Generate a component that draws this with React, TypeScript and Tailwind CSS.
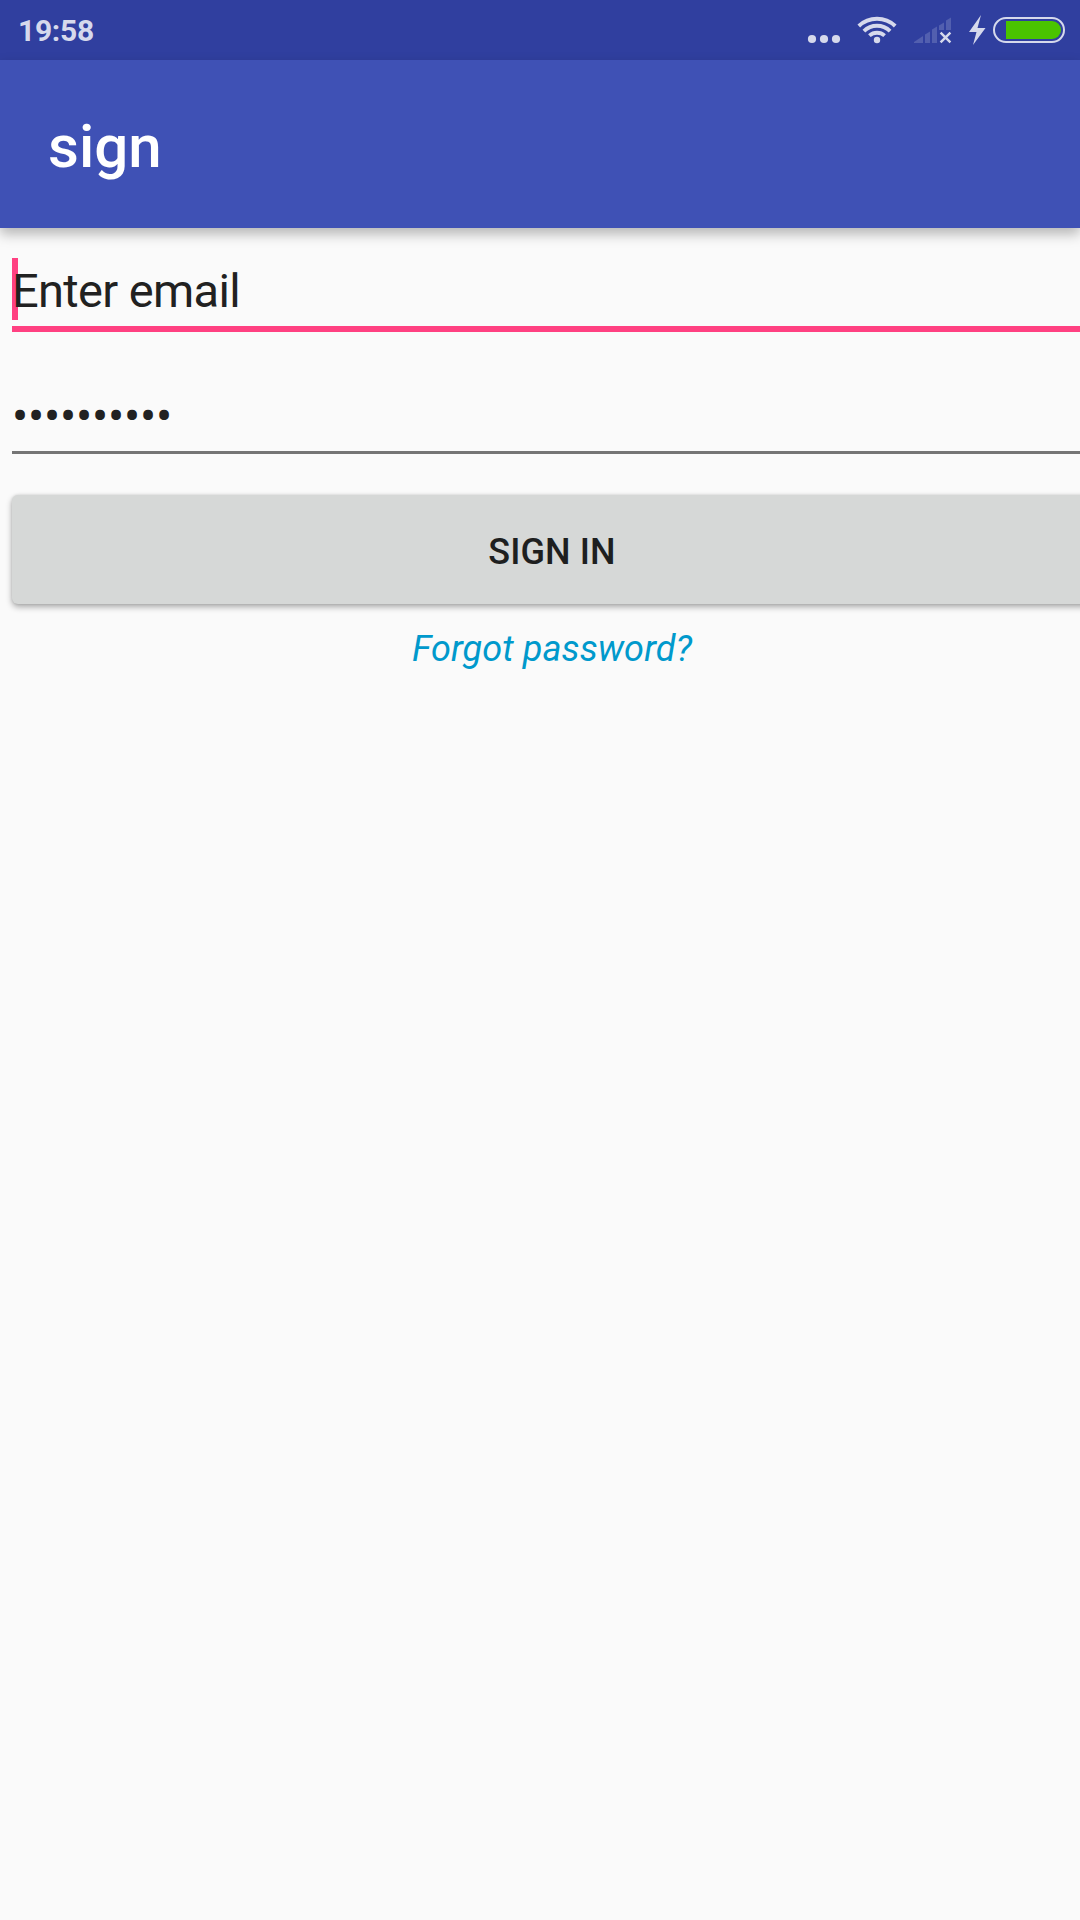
function StatusIcons() {
  return (
    <div className="flex h-full items-center">
      <svg width="280" height="60" viewBox="800 0 280 60" fill="none" aria-hidden="true">
        <g fill="#d6d9ec">
          <circle cx="812" cy="39" r="4.1" />
          <circle cx="824" cy="39" r="4.1" />
          <circle cx="836" cy="39" r="4.1" />
          <circle cx="877" cy="40" r="3.2" />
          <path d="M981 15 969 32H976.5L973 45 985.5 28H977.5Z" />
        </g>
        <g stroke="#d6d9ec" strokeWidth="3.9">
          <path d="M858.8 26A26.5 26.5 0 0 1 895.2 26" />
          <path d="M863.9 31.1A18.8 18.8 0 0 1 890.1 31.1" />
          <path d="M869.4 35.6A11.5 11.5 0 0 1 884.6 35.6" />
        </g>
        <g fill="#525faf">
          <path d="M914 43V42L923 36V43Z" />
          <path d="M925 43V34.5L930 31.5V43Z" />
          <path d="M932 43V29.5L937 26.5V43Z" />
          <path d="M939 30V25.5L944 22.5V30Z" />
          <path d="M946 30V20.5L951 17.5V30Z" />
        </g>
        <path d="M940.6 32.6 950.4 42.4M950.4 32.6 940.6 42.4" stroke="#d6d9ec" strokeWidth="2.4" />
        <rect x="994" y="18" width="70" height="24" rx="12" stroke="#d6d9ec" strokeWidth="2" />
        <path d="M1006 21H1052A9 9 0 0 1 1052 39H1006Z" fill="#4ac400" />
      </svg>
    </div>
  );
}

export default function App() {
  return (
    <div className="flex h-[1920px] w-[1080px] flex-col overflow-hidden bg-[#fafafa] font-[Roboto,sans-serif] text-[#212121]">
      <div className="flex h-[60px] shrink-0 items-center justify-between bg-[#303f9f] pl-[18px]">
        <span className="pt-[2px] text-[30px] leading-[60px] font-bold tracking-[-0.3px] text-[#d6d9ec]">19:58</span>
        <StatusIcons />
      </div>
      <header className="flex h-[168px] shrink-0 items-center bg-[#3f51b5] pt-[6px] pl-12 shadow-[0_6px_12px_rgba(0,0,0,0.28)]">
        <h1 className="text-[60px] leading-[70px] font-medium text-white">sign</h1>
      </header>
      <main className="flex w-[1104px] flex-col px-3 pt-[30px]">
        <div className="flex h-[74px] flex-col border-b-[6px] border-[#ff4081]">
          <div className="h-[62px] border-l-[6px] border-[#ff4081]">
            <span className="relative -left-[6px] text-[47px] leading-[66px] tracking-[-0.65px]">Enter email</span>
          </div>
        </div>
        <div className="mt-[60px] h-[62px] border-b-[3px] border-[#757575] text-[48px] leading-[50px] tracking-[-0.2px]">
          ••••••••••
        </div>
        <button className="mt-[41px] h-[109px] rounded-[6px] bg-[#d6d8d7] pt-[4px] text-[36px] font-medium tracking-[0.1px] text-[#1e1f1f] shadow-[0_3px_6px_rgba(0,0,0,0.32),0_0_3px_rgba(0,0,0,0.12)]">
          SIGN IN
        </button>
        <a className="mt-[24px] text-center text-[36px] leading-[42px] tracking-[0.1px] text-[#0099cc] italic">Forgot password?</a>
      </main>
    </div>
  );
}
